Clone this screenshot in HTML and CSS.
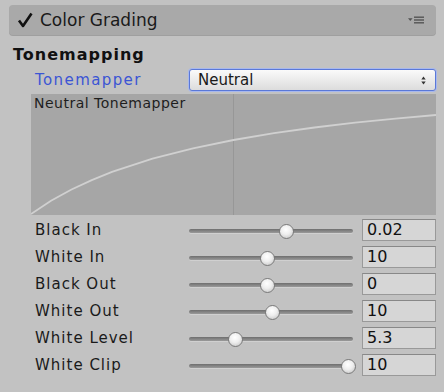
FILE: index.html
```html
<!DOCTYPE html>
<html>
<head>
<meta charset="utf-8">
<link rel="stylesheet" href="styles.css">
</head>
<body>
<div class="panel">
  <div class="header">
    <svg class="check" width="16" height="16" viewBox="0 0 16 16">
      <path d="M2 8.5 L6 14 L14.5 1.5" fill="none" stroke="#111" stroke-width="2.6" stroke-linejoin="round"/>
    </svg>
    <span class="title">Color Grading</span>
    <svg class="menu" width="16" height="8" viewBox="0 0 16 8">
      <path d="M0 2.2 L4.6 2.2 L2.3 5 Z" fill="#555"/>
      <rect x="6" y="0.5" width="10" height="1.4" fill="#555"/>
      <rect x="6" y="3.3" width="10" height="1.4" fill="#555"/>
      <rect x="6" y="6.1" width="10" height="1.4" fill="#555"/>
    </svg>
  </div>
  <div class="section">Tonemapping</div>
  <div class="tm-row">
    <span class="tm-label">Tonemapper</span>
    <div class="dropdown">
      <span>Neutral</span>
      <svg width="5" height="9" viewBox="0 0 5 9">
        <path d="M2.5 0.5 L4.7 3.5 L0.3 3.5 Z" fill="#333"/>
        <path d="M2.5 8.5 L4.7 5.5 L0.3 5.5 Z" fill="#333"/>
      </svg>
    </div>
  </div>
  <div class="graph">
    <span class="graph-title">Neutral Tonemapper</span>
    <svg class="graph-svg" width="405" height="121" viewBox="0 0 405 121">
      <line x1="202.5" y1="0" x2="202.5" y2="121" stroke="#979797" stroke-width="1"/>
      <polyline fill="none" stroke="#d0d0d0" stroke-width="1.8" points="0,120 20,106.7 40.5,95.5 60.75,86.1 81,77.9 121.5,64.7 162,54.3 202.5,46 243,39.2 283.5,33.5 324,28.7 364.5,24.6 405,21"/>
    </svg>
  </div>
  <div class="rows">
    <div class="row"><span class="label">Black In</span><div class="slider"><div class="track"></div><div class="knob" style="left:97px"></div></div><div class="num">0.02</div></div>
    <div class="row"><span class="label">White In</span><div class="slider"><div class="track"></div><div class="knob" style="left:78px"></div></div><div class="num">10</div></div>
    <div class="row"><span class="label">Black Out</span><div class="slider"><div class="track"></div><div class="knob" style="left:78px"></div></div><div class="num">0</div></div>
    <div class="row"><span class="label">White Out</span><div class="slider"><div class="track"></div><div class="knob" style="left:83px"></div></div><div class="num">10</div></div>
    <div class="row"><span class="label">White Level</span><div class="slider"><div class="track"></div><div class="knob" style="left:46px"></div></div><div class="num">5.3</div></div>
    <div class="row"><span class="label">White Clip</span><div class="slider"><div class="track"></div><div class="knob" style="left:159px"></div></div><div class="num">10</div></div>
  </div>
</div>
</body>
</html>
```

FILE: styles.css
```css
html, body {
  margin: 0;
  padding: 0;
  background: #c2c2c2;
}
body {
  width: 444px;
  height: 392px;
  overflow: hidden;
  font-family: "DejaVu Sans", sans-serif;
  color: #111;
}
.panel {
  padding: 5px 8px 0 9px;
}
.header {
  height: 30px;
  background: #a9a9a9;
  border-radius: 4px;
  display: flex;
  align-items: center;
  padding-left: 8px;
  padding-right: 12px;
  box-shadow: 0 1px 0 #9f9f9f;
}
.check {
  display: block;
  margin-right: 7px;
}
.title {
  font-size: 17px;
  color: #1a1a1a;
  flex: 1;
}
.menu {
  display: block;
}
.section {
  margin-top: 10px;
  margin-left: 4px;
  font-size: 16px;
  font-weight: bold;
  letter-spacing: 1px;
  height: 20px;
  line-height: 20px;
}
.tm-row {
  display: flex;
  align-items: center;
  height: 22px;
  margin-top: 4px;
}
.tm-label {
  color: #3b55d4;
  font-size: 15px;
  letter-spacing: 1.4px;
  margin-left: 26px;
  width: 154px;
}
.dropdown {
  flex: 1;
  height: 20px;
  border: 1px solid #5a78d8;
  border-radius: 3px;
  background: linear-gradient(#fafafa, #dcdcdc);
  display: flex;
  align-items: center;
  justify-content: space-between;
  padding: 0 9px 0 8px;
  font-size: 15px;
  color: #1a1a1a;
  box-shadow: 0 0 0 1px #a8b8ec;
}
.graph {
  position: relative;
  margin-top: 3px;
  margin-left: 22px;
  height: 121px;
  background: #a6a6a6;
}
.graph-svg {
  display: block;
}
.graph-title {
  position: absolute;
  left: 3px;
  top: 1px;
  font-size: 14px;
  letter-spacing: 0.5px;
  color: #1e1e1e;
}
.rows {
  margin-top: 4px;
  display: flex;
  flex-direction: column;
  gap: 5px;
}
.row {
  display: flex;
  align-items: center;
  height: 22px;
}
.label {
  font-size: 15px;
  letter-spacing: 1px;
  margin-left: 26px;
  width: 154px;
  flex: none;
  color: #1a1a1a;
}
.slider {
  position: relative;
  width: 164px;
  height: 22px;
  margin-right: 9px;
  flex: none;
}
.track {
  position: absolute;
  left: 0;
  right: 0;
  top: 10px;
  height: 4px;
  border-radius: 2px;
  background: linear-gradient(#6e6e6e, #9a9a9a);
  box-shadow: 0 1px 0 #d0d0d0;
}
.knob {
  position: absolute;
  top: 5px;
  width: 13px;
  height: 13px;
  margin-left: -7px;
  border-radius: 50%;
  border: 1px solid #7a7a7a;
  background: radial-gradient(circle at 45% 35%, #ffffff 0%, #eeeeee 45%, #bdbdbd 100%);
}
.num {
  flex: none;
  width: 68px;
  height: 20px;
  border: 1px solid #999;
  border-top-color: #888;
  background: #d6d6d6;
  font-size: 16px;
  line-height: 20px;
  padding-left: 4px;
}
```
